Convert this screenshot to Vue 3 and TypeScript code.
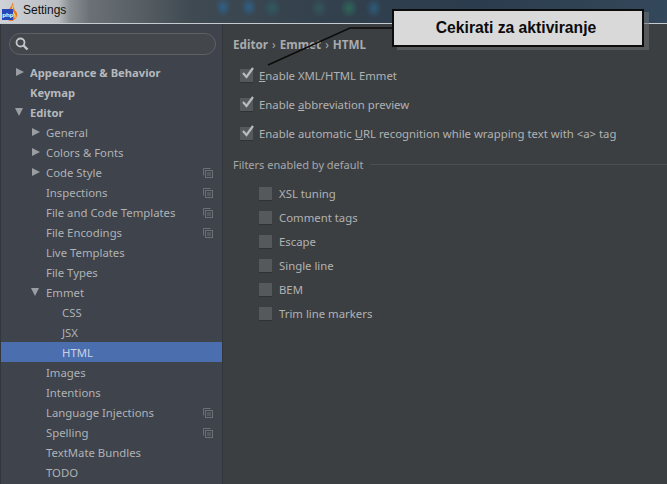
<script setup lang="ts">
interface TreeRow { label: string; indent: number; arrow?: 'right' | 'down'; bold?: boolean; copy?: boolean; selected?: boolean }
const tree: TreeRow[] = [
  { label: 'Appearance & Behavior', indent: 30, arrow: 'right', bold: true },
  { label: 'Keymap', indent: 30, bold: true },
  { label: 'Editor', indent: 30, arrow: 'down', bold: true },
  { label: 'General', indent: 46, arrow: 'right' },
  { label: 'Colors & Fonts', indent: 46, arrow: 'right' },
  { label: 'Code Style', indent: 46, arrow: 'right', copy: true },
  { label: 'Inspections', indent: 46, copy: true },
  { label: 'File and Code Templates', indent: 46, copy: true },
  { label: 'File Encodings', indent: 46, copy: true },
  { label: 'Live Templates', indent: 46 },
  { label: 'File Types', indent: 46 },
  { label: 'Emmet', indent: 46, arrow: 'down' },
  { label: 'CSS', indent: 62 },
  { label: 'JSX', indent: 62 },
  { label: 'HTML', indent: 62, selected: true },
  { label: 'Images', indent: 46 },
  { label: 'Intentions', indent: 46 },
  { label: 'Language Injections', indent: 46, copy: true },
  { label: 'Spelling', indent: 46, copy: true },
  { label: 'TextMate Bundles', indent: 46 },
  { label: 'TODO', indent: 46 }
]
const checks = [
  { before: '', key: 'E', after: 'nable XML/HTML Emmet' },
  { before: 'Enable ', key: 'a', after: 'bbreviation preview' },
  { before: 'Enable automatic ', key: 'U', after: 'RL recognition while wrapping text with <a> tag' }
]
const filters = ['XSL tuning', 'Comment tags', 'Escape', 'Single line', 'BEM', 'Trim line markers']
</script>

<template>
  <div class="window">
    <header class="titlebar">
      <svg class="app-icon" width="17" height="20" viewBox="0 0 17 20">
        <path d="M11 0c2 3-3 5-3 9 0 2 2 3 3 4 1 2 0 4-2 5l-2 1h4c3-1 6-4 5-8-1-2-3-3-3-5 0-2 0-4-2-6z" fill="#e8781e" />
        <path d="M12 3c1 2-2 4-1 6 1 2 4 3 3 7" stroke="#fbd36a" stroke-width="1.2" fill="none" />
        <rect x="1" y="7" width="11" height="11" fill="#2746b8" />
        <text x="1.2" y="15" class="php">php</text>
      </svg>
      <span class="title">Settings</span>
    </header>
    <div class="body">
      <aside class="sidebar">
        <div class="search">
          <svg width="14" height="14" viewBox="0 0 14 14" fill="none" stroke="#c4c7ca">
            <circle cx="5.5" cy="5.5" r="4" stroke-width="1.8" />
            <path d="M8.5 8.5l4 4" stroke-width="2.4" />
          </svg>
        </div>
        <ul class="tree">
          <li
            v-for="row in tree"
            :key="row.label"
            class="row"
            :class="{ bold: row.bold, selected: row.selected }"
            :style="{ paddingLeft: row.indent + 'px' }"
          >
            <span v-if="row.arrow" class="arrow" :class="row.arrow" />
            <span class="row-label">{{ row.label }}</span>
            <svg v-if="row.copy" class="copy" width="10" height="10" viewBox="0 0 10 10" fill="none" stroke="#6b6f76">
              <path d="M.5 7.5v-7h7" />
              <rect x="2.5" y="2.5" width="7" height="7" />
              <path d="M4 5h4M4 7h4" />
            </svg>
          </li>
        </ul>
      </aside>
      <main class="content">
        <div class="crumbs">Editor <i>›</i> Emmet <i>›</i> HTML</div>
        <label v-for="c in checks" :key="c.after" class="check">
          <span class="box">
            <svg width="15" height="15" viewBox="0 0 15 15" fill="none">
              <path d="M3 7l3.5 4L13 2" stroke="#b9bcbe" stroke-width="2.2" />
            </svg>
          </span>
          <span>{{ c.before }}<u>{{ c.key }}</u>{{ c.after }}</span>
        </label>
        <div class="group-title"><span>Filters enabled by default</span><hr /></div>
        <label v-for="f in filters" :key="f" class="filter">
          <span class="box small" />
          <span>{{ f }}</span>
        </label>
      </main>
    </div>
    <svg class="leader" width="140" height="50" viewBox="0 0 140 50" fill="none">
      <path d="M1 42L83 5H130" stroke="#0c0c0c" stroke-width="1.5" />
    </svg>
    <div class="callout">Cekirati za aktiviranje</div>
  </div>
</template>

<style scoped>
.window {
  position: relative;
  width: 667px;
  height: 484px;
  overflow: hidden;
  background: #3c3f41;
  font-family: "Noto Sans", sans-serif;
  font-size: 11.35px;
  color: #b0b2b4;
}
.titlebar {
  display: flex;
  align-items: center;
  gap: 5px;
  height: 24px;
  padding-left: 1px;
  box-sizing: border-box;
  border-bottom: 1px solid #c6cbd0;
  background:
    radial-gradient(ellipse 8px 10px at 223px 7px, #2f5f86, transparent),
    radial-gradient(ellipse 8px 10px at 249px 7px, #2f5f86, transparent),
    radial-gradient(ellipse 9px 10px at 272px 8px, #2e5a60, transparent),
    radial-gradient(ellipse 9px 10px at 319px 8px, #34555a, transparent),
    radial-gradient(ellipse 9px 10px at 349px 8px, #2f6658, transparent),
    radial-gradient(ellipse 8px 10px at 374px 8px, #2f5a7a, transparent),
    linear-gradient(90deg, #cfd2d6 0, #b9bdc1 58px, #8a8f94 70px, #6a7076 90px, #585f64 140px, #3f4a52 190px, #33414d 320px, #2b3c4e 480px, #33485a 667px);
}
.app-icon { flex: none; }
.php {
  font-family: "Liberation Sans", sans-serif;
  font-size: 6.2px;
  font-weight: 700;
  fill: #fff;
}
.title {
  margin-top: -3px;
  font-family: "Liberation Sans", sans-serif;
  font-size: 12px;
  color: #111;
}
.body {
  display: flex;
  height: 460px;
}
.sidebar {
  flex: none;
  width: 222px;
  background: #3e434c;
  border-right: 1px solid #32353a;
  box-shadow: inset 1px 0 0 #33363b;
}
.search {
  display: flex;
  align-items: center;
  box-sizing: border-box;
  width: 207px;
  height: 22px;
  margin: 9px 0 7px 9px;
  padding-left: 5px;
  border: 1px solid #5e6266;
  border-radius: 11px;
  background: #43474b;
}
.tree {
  list-style: none;
  margin: 0;
  padding: 0;
}
.row {
  position: relative;
  display: flex;
  align-items: center;
  height: 20px;
  margin-left: 1px;
  box-sizing: border-box;
}
.row-label { margin-left: -1px; }
.bold { font-weight: 700; font-size: 11.2px; color: #b6b9bc; }
.selected {
  background: #4b6eaf;
  color: #c9d2e4;
}
.arrow {
  position: absolute;
  width: 0;
  height: 0;
  margin-left: -15px;
}
.arrow.right {
  border-top: 4.5px solid transparent;
  border-bottom: 4.5px solid transparent;
  border-left: 8px solid #9a9da1;
}
.arrow.down {
  margin-left: -16px;
  border-left: 4.5px solid transparent;
  border-right: 4.5px solid transparent;
  border-top: 8px solid #9a9da1;
}
.copy {
  position: absolute;
  left: 202px;
  top: 6px;
}
.content {
  flex: 1;
  padding-left: 10px;
  min-width: 0;
}
.crumbs {
  height: 27px;
  margin-top: 10px;
  line-height: 20px;
  font-size: 11.7px;
  font-weight: 700;
  color: #a9abad;
}
.crumbs i {
  font-style: normal;
  font-weight: 400;
  margin: 0 1px;
}
.check {
  display: flex;
  align-items: center;
  gap: 6px;
  height: 29px;
  padding-left: 7px;
}
.box {
  flex: none;
  box-sizing: border-box;
  position: relative;
  width: 13px;
  height: 13px;
  background: #56595b;
  box-shadow: 0 1px 0 #2f3133;
}
.box svg {
  position: absolute;
  left: 0;
  top: -3px;
}
.group-title {
  display: flex;
  align-items: center;
  gap: 7px;
  height: 20px;
  margin-top: 6px;
  margin-bottom: 7px;
  font-size: 11px;
  color: #a6a8aa;
}
.group-title hr {
  flex: 1;
  margin: 0;
  border: 0;
  border-top: 1px solid #4c4f51;
}
.filter {
  display: flex;
  align-items: center;
  gap: 7px;
  height: 24px;
  padding-left: 26px;
}
.leader {
  position: absolute;
  left: 267px;
  top: 23px;
}
.callout {
  position: absolute;
  left: 392px;
  top: 9px;
  width: 252px;
  height: 38px;
  box-sizing: border-box;
  display: flex;
  align-items: center;
  justify-content: center;
  padding-right: 4px;
  border: 2px solid #0d0d0d;
  background: #d9d9d9;
  box-shadow: 5px 3px 0 rgba(110, 113, 115, 0.55);
  font-family: "Liberation Sans", sans-serif;
  font-weight: 700;
  font-size: 15.7px;
  color: #0b0b0b;
}
</style>
